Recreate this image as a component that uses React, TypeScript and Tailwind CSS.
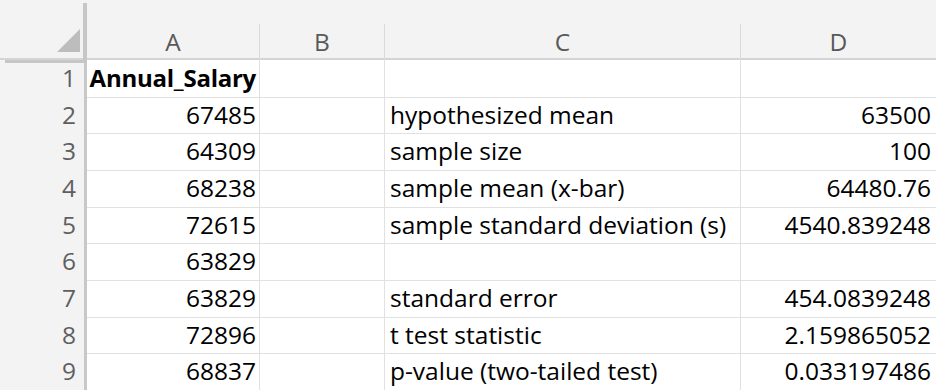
const cols = ['A', 'B', 'C', 'D']

type Row = {
  a?: string
  c?: string
  d?: string
  bold?: boolean
}

const rows: Row[] = [
  { a: 'Annual_Salary', bold: true },
  { a: '67485', c: 'hypothesized mean', d: '63500' },
  { a: '64309', c: 'sample size', d: '100' },
  { a: '68238', c: 'sample mean (x-bar)', d: '64480.76' },
  { a: '72615', c: 'sample standard deviation (s)', d: '4540.839248' },
  { a: '63829' },
  { a: '63829', c: 'standard error', d: '454.0839248' },
  { a: '72896', c: 't test statistic', d: '2.159865052' },
  { a: '68837', c: 'p-value (two-tailed test)', d: '0.033197486' },
]

const gridCols = 'grid grid-cols-[87px_173px_125px_356px_1fr]'

export default function App() {
  return (
    <div
      className="w-[936px] h-[390px] overflow-hidden bg-white text-[24.5px] text-black"
      style={{ fontFamily: '"Open Sans", sans-serif' }}
    >
      {/* column header */}
      <div className={`${gridCols} h-[60px] bg-[#f3f3f3] border-b-2 border-[#d4d4d4]`}>
        <div className="relative">
          <div className="absolute left-[5px] right-0 top-[3px] bottom-[-2px] border-r-[4px] border-b-[3px] border-[#c6c6c6]" />
          <svg className="absolute left-[57px] top-[29px]" width="23" height="23" viewBox="0 0 23 23">
            <polygon points="0,23 23,0 23,23" fill="#bdbdbd" />
          </svg>
        </div>
        {cols.map((c, i) => (
          <div key={c} className="flex flex-col">
            <div className="h-[24px]" />
            <div
              className={`flex-1 flex items-center justify-center text-[#595959] ${
                i < cols.length - 1 ? 'border-r border-[#dadada]' : ''
              }`}
            >
              {c}
            </div>
          </div>
        ))}
      </div>

      {rows.map((r, i) => (
        <div key={i} className={`${gridCols} h-[36.67px]`}>
          <div className="flex items-center justify-end pr-[8px] bg-[#f3f3f3] text-[#5f5f5f] border-r-[3px] border-r-[#c8c8c8] border-b border-b-[#e1e1e1]">
            {i + 1}
          </div>
          <div
            className={`flex items-center justify-end pr-[3px] whitespace-nowrap border-r border-b border-[#e1e1e1] ${
              r.bold ? 'font-bold text-[24px] tracking-[-0.25px]' : ''
            }`}
          >
            {r.a}
          </div>
          <div className="border-r border-b border-[#e1e1e1]" />
          <div className="flex items-center pl-[5px] whitespace-nowrap border-r border-b border-[#e1e1e1]">
            {r.c}
          </div>
          <div className="flex items-center justify-end pr-[5px] whitespace-nowrap border-b border-[#e1e1e1]">
            {r.d}
          </div>
        </div>
      ))}
    </div>
  )
}
